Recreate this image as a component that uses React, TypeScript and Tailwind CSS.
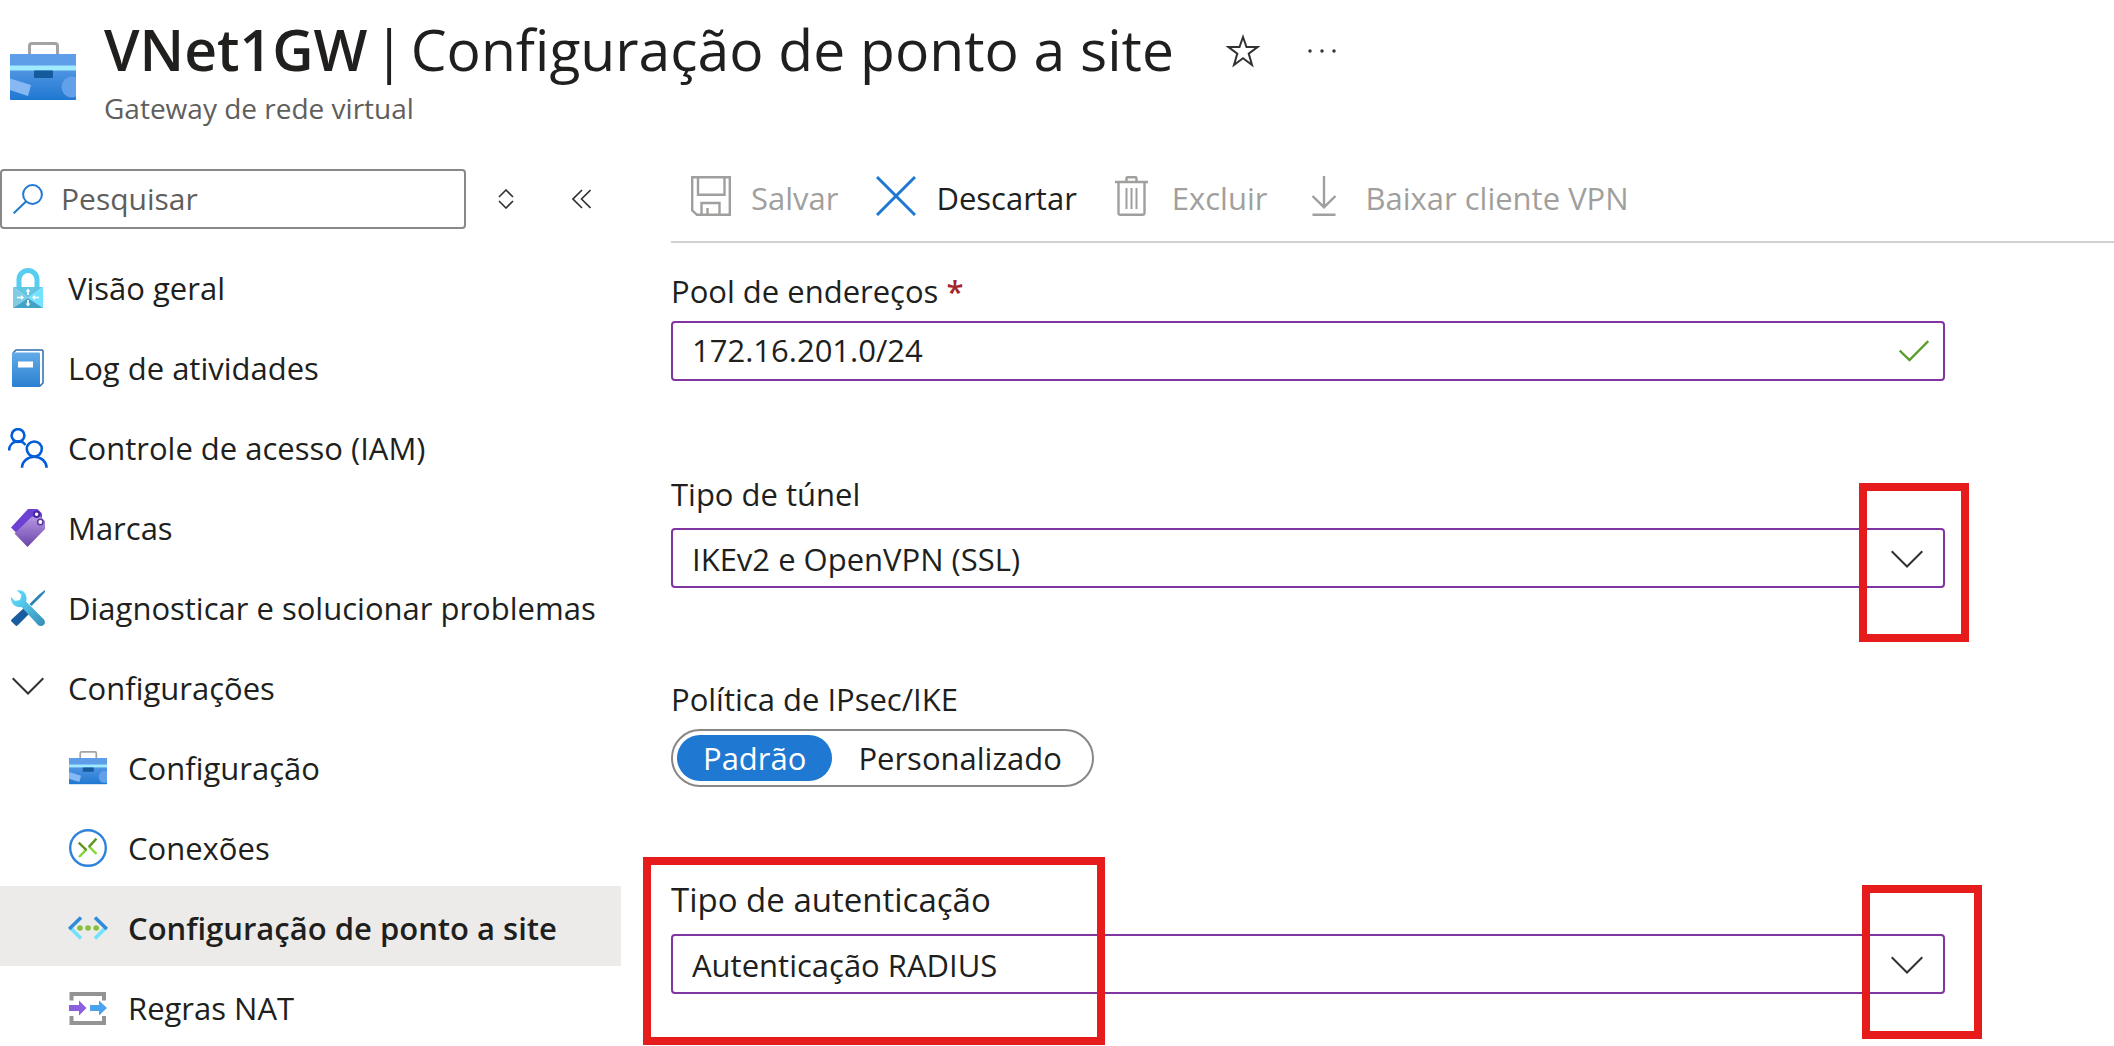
import { ReactNode, useState } from 'react';
import clsx from 'clsx';

type IconProps = {
  className?: string;
};

function BriefcaseIcon({ className }: IconProps) {
  return (
    <svg viewBox="0 0 66 58" className={className} aria-hidden="true">
      <defs>
        <linearGradient id="case" x1="0" y1="0" x2="0" y2="1">
          <stop offset="0.2" stopColor="#5a9be6" />
          <stop offset="1" stopColor="#1f78d1" />
        </linearGradient>
        <clipPath id="caseClip">
          <rect y="12" width="66" height="46" rx="1" />
        </clipPath>
      </defs>
      <path
        d="M19.5 13V4a2.5 2.5 0 0 1 2.5-2.5h23a2.5 2.5 0 0 1 2.5 2.5V13"
        fill="none"
        stroke="#a3a3a3"
        strokeWidth="3"
      />
      <g clipPath="url(#caseClip)">
        <rect y="12" width="66" height="46" fill="url(#case)" />
        <rect y="12" width="66" height="12" fill="#5e9de8" />
        <rect y="23.5" width="66" height="5" fill="#9feaff" />
        <rect x="24" y="28.5" width="19" height="7.5" rx="1" fill="#155a9c" />
        <path d="M0 36.5 21 43 18 54 0 48Z" fill="#86b8f4" />
        <circle cx="62" cy="45" r="10.5" fill="#63a0ea" />
      </g>
    </svg>
  );
}

function LockIcon() {
  return (
    <svg width="30" height="40" viewBox="0 0 30 40" aria-hidden="true">
      <path
        d="M6 20V11.5a9 9 0 0 1 18 0V20"
        fill="none"
        stroke="#57cdf0"
        strokeWidth="5"
      />
      <path d="M0 19H30L15 30Z" fill="#62c5e3" />
      <path d="M0 19 15 30 0 40Z" fill="#7fcbe2" />
      <path d="M30 19 15 30 30 40Z" fill="#72e3ff" />
      <path d="M0 40 15 30 30 40Z" fill="#3fa2c9" />
      <g stroke="#fff" strokeWidth="1.7" fill="#fff">
        <path d="M15 27V23M15 32V36M4 29.5H8M26 29.5H22" />
        <path
          d="M15 20.5 17.5 23.5H12.5ZM15 38.5 17.5 35.5H12.5ZM11 29.5 8 27V32ZM19 29.5 22 27V32Z"
          stroke="none"
        />
      </g>
    </svg>
  );
}

function BookIcon() {
  return (
    <svg width="32" height="38" viewBox="0 0 32 38" aria-hidden="true">
      <defs>
        <linearGradient id="book" x1="0" y1="0" x2="0" y2="1">
          <stop offset="0" stopColor="#62abe8" />
          <stop offset="1" stopColor="#2b80d0" />
        </linearGradient>
      </defs>
      <path
        d="M1 4 4 1H30a1 1 0 0 1 1 1V34L28 37H20"
        fill="#fff"
        stroke="#2a6cae"
        strokeWidth="1.5"
      />
      <rect y="3.5" width="28" height="34.5" rx="1" fill="url(#book)" />
      <rect x="6" y="12.5" width="15" height="6" fill="#fff" />
    </svg>
  );
}

function PeopleIcon() {
  return (
    <svg width="40" height="40" viewBox="0 0 40 40" aria-hidden="true">
      <g fill="none" stroke="#015cda" strokeWidth="2.6">
        <circle cx="10" cy="7.5" r="6.4" />
        <path d="M1.2 22.5A9 8.8 0 0 1 17.5 17" />
        <circle cx="26.3" cy="21" r="7.5" />
        <path d="M14 39.7A12.3 11 0 0 1 38.6 39.7" />
      </g>
    </svg>
  );
}

function TagIcon() {
  return (
    <svg width="34" height="38" viewBox="0 0 34 38" aria-hidden="true">
      <defs>
        <linearGradient id="tag" x1="0" y1="0" x2="0" y2="1">
          <stop offset="0" stopColor="#b796e3" />
          <stop offset="1" stopColor="#6a45a8" />
        </linearGradient>
      </defs>
      <path d="M0 18.5 17 0H26.5L31 4.5V9L5 23.5Z" fill="#6b40d2" />
      <path
        d="M3.5 24.5 20 8.5Q21 7.5 22.5 7.5H29.5L34 12V20L16.5 38Z"
        fill="url(#tag)"
      />
      <circle cx="25.6" cy="5.3" r="2.7" fill="#fff" stroke="#42259a" strokeWidth="1.8" />
      <circle cx="29.3" cy="13" r="2.7" fill="#fff" stroke="#5e3a9e" strokeWidth="1.6" />
    </svg>
  );
}

function ToolsIcon() {
  return (
    <svg width="34" height="36" viewBox="0 0 34 36" aria-hidden="true">
      <defs>
        <linearGradient id="wrench" x1="0" y1="0" x2="1" y2="1">
          <stop offset="0.2" stopColor="#5ad4f6" />
          <stop offset="1" stopColor="#358cb4" />
        </linearGradient>
      </defs>
      <path d="M33.8 0 34 2 30 6.5 20.5 16 18.5 14 27.5 5Z" fill="#2d84b3" />
      <path d="M13.5 17.5 19 23 6.5 35.5Q5.5 36.3 4.5 35.5L.5 31.5Q-.3 30.5.5 29.5Z" fill="#195c9f" />
      <path
        d="M6 .5C11-1 15.5 3 15.5 8 15.5 9.5 15.3 10.5 15 11.5L33 29.5C36 34 31 38 27 35L10.5 17C5 18-.5 14 0 7L4 11 9 10 10.5 5Z"
        fill="url(#wrench)"
      />
    </svg>
  );
}

function ConnectionsIcon() {
  return (
    <svg width="38" height="38" viewBox="0 0 38 38" aria-hidden="true">
      <g fill="none" strokeWidth="2.4">
        <circle cx="19" cy="19" r="17.8" stroke="#2f83da" />
        <path d="M10 28 17.3 20.7M27.5 25 20 17.3" stroke="#86d633" />
        <path d="M9.7 13.7 17.5 21.2M27.5 9.7 19.8 17.8" stroke="#5e9624" />
      </g>
    </svg>
  );
}

function PointToSiteIcon() {
  return (
    <svg width="40" height="24" viewBox="0 0 40 24" aria-hidden="true">
      <g fill="none" strokeWidth="3.6">
        <path d="M1.5 11 13 22.5M38.5 11 27 22.5" stroke="#70e2fd" />
        <path d="M13 1.5 1.2 13M27 1.5 38.8 13" stroke="#2f8bdc" />
      </g>
      <g fill="#86c03c">
        <circle cx="12" cy="12" r="2.8" />
        <circle cx="20" cy="12" r="2.8" />
        <circle cx="28.2" cy="12" r="2.8" />
      </g>
    </svg>
  );
}

function NatIcon() {
  return (
    <svg width="38" height="33" viewBox="0 0 38 33" aria-hidden="true">
      <path
        d="M2.5 8.5V2H35V8.5M2.5 24V31H35V24"
        fill="none"
        stroke="#949494"
        strokeWidth="4"
      />
      <path d="M0 13H10V8.5L17.5 16 10 23.5V19H0Z" fill="#8a5fe0" />
      <path d="M21 13H30V8.5L38 16 30 23.5V19H21Z" fill="#4ba3ee" />
    </svg>
  );
}

function ChevronIcon({ className }: IconProps) {
  return (
    <svg width="32" height="18" viewBox="0 0 32 18" className={className} aria-hidden="true">
      <path d="M.7 1.2 16 16.5 31.3 1.2" fill="none" stroke="#323130" strokeWidth="2" />
    </svg>
  );
}

function SearchIcon() {
  return (
    <svg width="30" height="30" viewBox="0 0 30 30" fill="none" stroke="#1f78d1" strokeWidth="2" aria-hidden="true">
      <circle cx="19.5" cy="10.5" r="9.4" />
      <path d="M13 17.5.7 29.3" />
    </svg>
  );
}

function SaveIcon() {
  return (
    <svg width="40" height="40" viewBox="0 0 40 40" fill="none" stroke="currentColor" strokeWidth="2.4" aria-hidden="true">
      <path d="M1.2 1.2H38.8V38.8H6L1.2 34.5Z" />
      <path d="M7 1.2V18.8H33.5V1.2M10.5 38.8V27H28.5V38.8M16.5 38.8V32" />
    </svg>
  );
}

function DiscardIcon() {
  return (
    <svg width="40" height="40" viewBox="0 0 40 40" fill="none" stroke="#1f78d1" strokeWidth="3" aria-hidden="true">
      <path d="M1 1 39 39M39 1 1 39" />
    </svg>
  );
}

function TrashIcon() {
  return (
    <svg width="33" height="40" viewBox="0 0 33 40" fill="none" stroke="currentColor" strokeWidth="2.4" aria-hidden="true">
      <path d="M0 6H33M11.5 5.5V2.2Q11.5 1.2 12.5 1.2H20.5Q21.5 1.2 21.5 2.2V5.5" />
      <path d="M3.5 6V37Q3.5 38.8 5.5 38.8H27.5Q29.5 38.8 29.5 37V6" />
      <path d="M11.5 12V33M16.5 12V33M21.5 12V33" strokeWidth="2" />
    </svg>
  );
}

function DownloadIcon() {
  return (
    <svg width="26" height="40" viewBox="0 0 26 40" fill="none" stroke="currentColor" strokeWidth="2.4" aria-hidden="true">
      <path d="M13 0V31M1.5 20 13 31.2 24.5 20M1.5 38.8H24.5" />
    </svg>
  );
}

type NavItem = {
  label: string;
  icon: ReactNode;
  nested?: boolean;
};

const navItems: NavItem[] = [
  { label: 'Visão geral', icon: <LockIcon /> },
  { label: 'Log de atividades', icon: <BookIcon /> },
  { label: 'Controle de acesso (IAM)', icon: <PeopleIcon /> },
  { label: 'Marcas', icon: <TagIcon /> },
  { label: 'Diagnosticar e solucionar problemas', icon: <ToolsIcon /> },
  { label: 'Configurações', icon: <ChevronIcon className="mb-1" /> },
  { label: 'Configuração', icon: <BriefcaseIcon className="w-[38px]" />, nested: true },
  { label: 'Conexões', icon: <ConnectionsIcon />, nested: true },
  { label: 'Configuração de ponto a site', icon: <PointToSiteIcon />, nested: true },
  { label: 'Regras NAT', icon: <NatIcon />, nested: true },
];

function Header() {
  return (
    <header className="flex h-[169px] pl-[10px]">
      <BriefcaseIcon className="mt-[42px] w-[66px] self-start" />
      <div className="ml-7 pt-2">
        <div className="flex items-center">
          <h1 className="flex text-[57px] leading-[82px] whitespace-nowrap">
            <span className="mr-1.5 font-semibold">VNet1GW</span>
            <span className="mr-1.5">|</span>
            <span>Configuração de ponto a site</span>
          </h1>
          <button type="button" aria-label="Favorito" className="mt-1 ml-[52px]">
            <svg width="34" height="34" viewBox="0 0 34 34" fill="none" stroke="#323130" strokeWidth="2">
              <path d="M17 3 20.5 13H31.5L22.7 19.6 26 31 17 24.2 8 31 11.3 19.6 2.5 13H13.5Z" />
            </svg>
          </button>
          <button type="button" aria-label="Mais opções" className="mt-1 ml-12">
            <svg width="28" height="4" viewBox="0 0 28 4" fill="#323130">
              <circle cx="2" cy="2" r="1.7" />
              <circle cx="14" cy="2" r="1.7" />
              <circle cx="26" cy="2" r="1.7" />
            </svg>
          </button>
        </div>
        <p className="text-[28px] leading-9 text-[#605e5c]">Gateway de rede virtual</p>
      </div>
    </header>
  );
}

function Sidebar() {
  const [selected, setSelected] = useState('Configuração de ponto a site');

  return (
    <aside className="w-[621px] shrink-0">
      <div className="flex items-center">
        <label className="flex h-[60px] w-[466px] items-center gap-[18px] rounded border-2 border-[#8a8886] pl-[11px]">
          <SearchIcon />
          <input
            type="search"
            aria-label="Pesquisar"
            placeholder="Pesquisar"
            className="min-w-0 flex-1 text-[30px] outline-none placeholder:text-[#605e5c]"
          />
        </label>
        <button type="button" aria-label="Expandir tudo" className="ml-8">
          <svg width="16" height="20" viewBox="0 0 16 20" fill="none" stroke="#323130" strokeWidth="1.6">
            <path d="M1 8 8 1 15 8M1 12 8 19 15 12" />
          </svg>
        </button>
        <button type="button" aria-label="Recolher menu" className="ml-[58px]">
          <svg width="19" height="20" viewBox="0 0 19 20" fill="none" stroke="#323130" strokeWidth="1.6">
            <path d="M10 1 1 10 10 19M18.5 1 9.5 10 18.5 19" />
          </svg>
        </button>
      </div>
      <nav className="mt-[17px]">
        {navItems.map((item) => (
          <button
            type="button"
            key={item.label}
            onClick={() => setSelected(item.label)}
            className={clsx(
              'flex h-20 w-full items-center gap-5 pt-1 text-left whitespace-nowrap',
              item.nested ? 'pl-[68px]' : 'pl-2',
              selected === item.label && 'bg-[#edebe9] font-semibold'
            )}
          >
            <span className="flex w-10 shrink-0 justify-center">{item.icon}</span>
            {item.label}
          </button>
        ))}
      </nav>
    </aside>
  );
}

function Toolbar() {
  return (
    <div className="flex h-[74px] items-center border-b-2 border-[#d2d0ce] pb-[18px] pl-5 whitespace-nowrap text-[#a19f9d]">
      <button type="button" disabled className="flex items-center gap-5">
        <SaveIcon />
        <span className="pt-1">Salvar</span>
      </button>
      <button type="button" className="ml-[38px] flex items-center gap-5 text-[#201f1e]">
        <DiscardIcon />
        <span className="pt-1">Descartar</span>
      </button>
      <button type="button" disabled className="ml-[38px] flex items-center gap-6">
        <TrashIcon />
        <span className="pt-1">Excluir</span>
      </button>
      <button type="button" disabled className="ml-11 flex items-center gap-7">
        <DownloadIcon />
        <span className="pt-1">Baixar cliente VPN</span>
      </button>
    </div>
  );
}

type SelectFieldProps = {
  id: string;
  label: string;
  options: string[];
  labelClassName?: string;
  children?: ReactNode;
};

function SelectField({ id, label, options, labelClassName, children }: SelectFieldProps) {
  return (
    <div className="relative">
      <label htmlFor={id} className={clsx('block leading-10', labelClassName)}>
        {label}
      </label>
      <div className="relative mt-[14px]">
        <select
          id={id}
          className="h-[60px] w-full appearance-none rounded border-2 border-[#8035a0] bg-white pt-0.5 pl-[19px] outline-none"
        >
          {options.map((option) => (
            <option key={option}>{option}</option>
          ))}
        </select>
        <ChevronIcon className="pointer-events-none absolute top-[22px] right-[22px]" />
      </div>
      {children}
    </div>
  );
}

function PolicyToggle() {
  const [policy, setPolicy] = useState('Padrão');

  return (
    <fieldset>
      <legend className="leading-10">Política de IPsec/IKE</legend>
      <div className="mt-[10px] inline-flex h-[58px] rounded-full border-2 border-[#8a8886] p-1">
        {['Padrão', 'Personalizado'].map((option) => (
          <label
            key={option}
            className={clsx(
              'flex h-[46px] items-center rounded-full px-[26px]',
              policy === option && 'bg-[#1f78d1] text-white'
            )}
          >
            <input
              type="radio"
              name="policy"
              value={option}
              checked={policy === option}
              onChange={() => setPolicy(option)}
              className="sr-only"
            />
            {option}
          </label>
        ))}
      </div>
    </fieldset>
  );
}

function App() {
  return (
    <div className="overflow-x-hidden bg-white font-['Segoe_UI','Open_Sans',sans-serif] text-[31px] leading-10 text-[#201f1e]">
      <Header />
      <div className="flex">
        <Sidebar />
        <main className="ml-[50px] min-w-0 flex-1">
          <Toolbar />
          <form className="mr-[169px] pt-7">
            <label htmlFor="pool" className="block leading-10">
              Pool de endereços <span className="font-semibold text-[#a4262c]">*</span>
            </label>
            <div className="relative mt-[10px]">
              <input
                id="pool"
                type="text"
                defaultValue="172.16.201.0/24"
                className="h-[60px] w-full rounded border-2 border-[#8035a0] pr-16 pb-0.5 pl-[19px] outline-none"
              />
              <svg width="30" height="22" viewBox="0 0 30 22" className="absolute top-[19px] right-4" aria-hidden="true">
                <path d="M.7 10.5 10.5 20 29.3 1" fill="none" stroke="#5c9e2b" strokeWidth="2.4" />
              </svg>
            </div>
            <div className="mt-[93px]">
              <SelectField id="tunnel" label="Tipo de túnel" options={['IKEv2 e OpenVPN (SSL)']}>
                <div className="pointer-events-none absolute top-[9px] -right-6 h-[159px] w-[110px] border-8 border-[#e61c1c]" />
              </SelectField>
            </div>
            <div className="mt-[91px]">
              <PolicyToggle />
            </div>
            <div className="mt-[93px]">
              <SelectField
                id="auth"
                label="Tipo de autenticação"
                labelClassName="text-[33px]"
                options={['Autenticação RADIUS']}
              >
                <div className="pointer-events-none absolute -top-[23px] -left-7 h-[188px] w-[462px] border-8 border-[#e61c1c]" />
                <div className="pointer-events-none absolute top-[5px] -right-[37px] h-[154px] w-[120px] border-8 border-[#e61c1c]" />
              </SelectField>
            </div>
          </form>
        </main>
      </div>
    </div>
  );
}

export default App;
